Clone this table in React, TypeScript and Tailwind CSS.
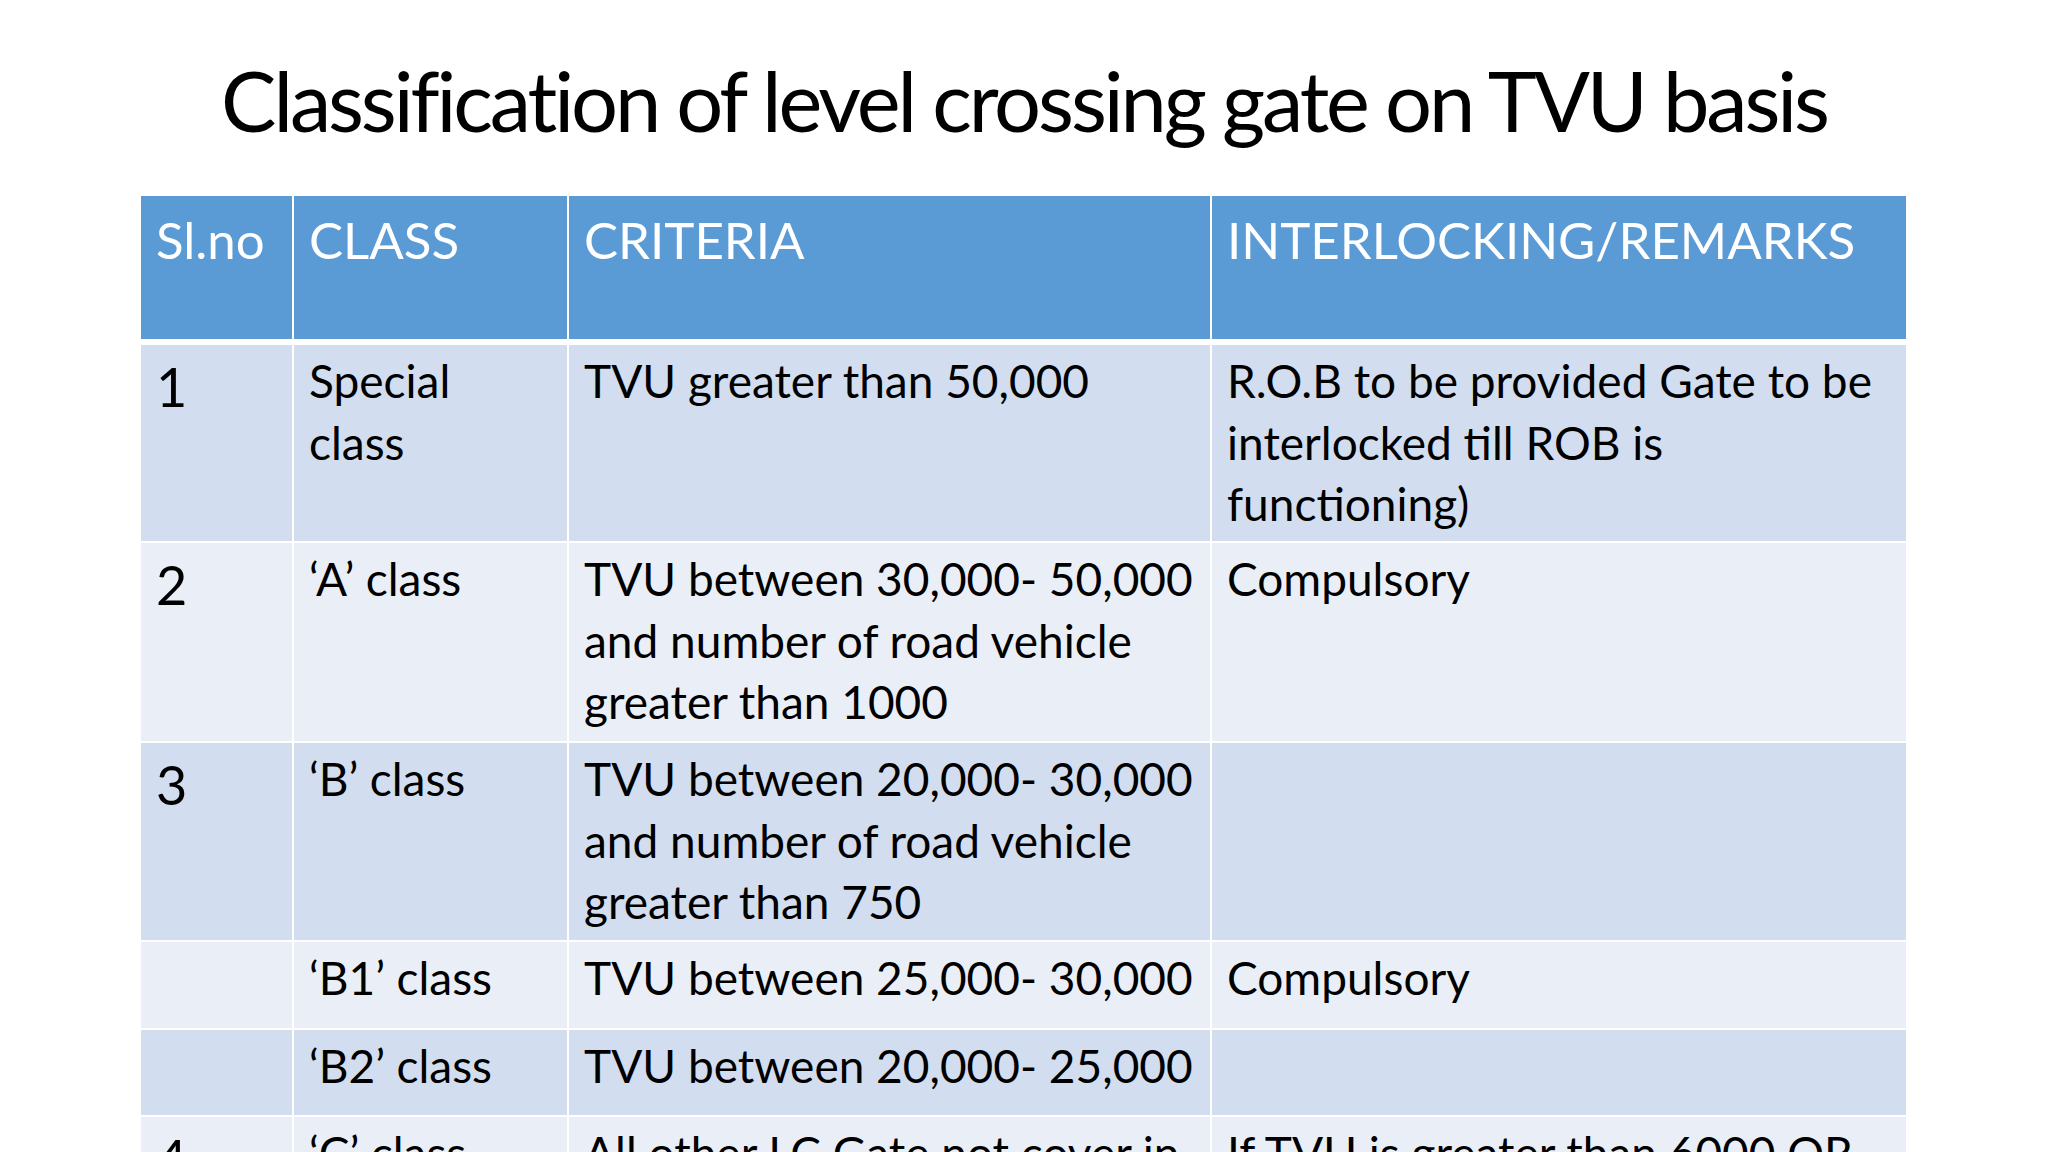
import React from "react";

const cols = "grid grid-cols-[151px_273px_641px_694px] gap-x-[2px]";

type Row = {
  h: string;
  bg: string;
  no: string;
  cls: React.ReactNode;
  crit: React.ReactNode;
  rem: React.ReactNode;
};

const rows: Row[] = [
  {
    h: "h-[196px]",
    bg: "bg-[#d2deef]",
    no: "1",
    cls: (
      <>
        Special
        <br />
        class
      </>
    ),
    crit: "TVU greater than 50,000",
    rem: (
      <>
        R.O.B to be provided Gate to be
        <br />
        interlocked till ROB is
        <br />
        functioning)
      </>
    ),
  },
  {
    h: "h-[198px]",
    bg: "bg-[#eaeff7]",
    no: "2",
    cls: "\u2018A\u2019 class",
    crit: (
      <>
        TVU between 30,000- 50,000
        <br />
        and number of road vehicle
        <br />
        greater than 1000
      </>
    ),
    rem: "Compulsory",
  },
  {
    h: "h-[197px]",
    bg: "bg-[#d2deef]",
    no: "3",
    cls: "\u2018B\u2019 class",
    crit: (
      <>
        TVU between 20,000- 30,000
        <br />
        and number of road vehicle
        <br />
        greater than 750
      </>
    ),
    rem: "",
  },
  {
    h: "h-[86px]",
    bg: "bg-[#eaeff7]",
    no: "",
    cls: "\u2018B1\u2019 class",
    crit: "TVU between 25,000- 30,000",
    rem: "Compulsory",
  },
  {
    h: "h-[85px]",
    bg: "bg-[#d2deef]",
    no: "",
    cls: "\u2018B2\u2019 class",
    crit: "TVU between 20,000- 25,000",
    rem: "",
  },
  {
    h: "h-[200px]",
    bg: "bg-[#eaeff7]",
    no: "4",
    cls: "\u2018C\u2019 class",
    crit: "All other LC Gate not cover in",
    rem: "If TVU is greater than 6000 OR",
  },
];

export default function App() {
  return (
    <div
      className="w-[2048px] h-[1152px] overflow-hidden bg-white text-black"
      style={{ fontFamily: "Lato, 'Open Sans', sans-serif" }}
    >
      <div className="h-[196px] pt-[51px] text-center text-[83px] leading-[99.6px] tracking-[-3.1px] whitespace-nowrap">
        Classification of level crossing gate on TVU basis
      </div>
      <div className="ml-[141px] w-[1765px] flex flex-col">
        <div className={`${cols} h-[143px] text-white text-[51px] leading-[61px]`}>
          <div className="bg-[#5b9bd5] pl-[15px] pt-[13px] whitespace-nowrap">Sl.no</div>
          <div className="bg-[#5b9bd5] pl-[15px] pt-[13px] whitespace-nowrap">CLASS</div>
          <div className="bg-[#5b9bd5] pl-[15px] pt-[13px] whitespace-nowrap">CRITERIA</div>
          <div className="bg-[#5b9bd5] pl-[15px] pt-[13px] whitespace-nowrap">INTERLOCKING/REMARKS</div>
        </div>
        <div className="flex flex-col gap-y-[2px] mt-[6px]">
          {rows.map((r, i) => (
            <div key={i} className={`${cols} ${r.h}`}>
              <div className={`${r.bg} pl-[15px] pt-[9px] text-[54px] leading-[65px] whitespace-nowrap`}>
                {r.no}
              </div>
              <div className={`${r.bg} pl-[15px] pt-[5px] text-[46px] leading-[61.5px] whitespace-nowrap`}>
                {r.cls}
              </div>
              <div className={`${r.bg} pl-[15px] pt-[5px] text-[46px] leading-[61.5px] whitespace-nowrap`}>
                {r.crit}
              </div>
              <div className={`${r.bg} pl-[15px] pt-[5px] text-[46px] leading-[61.5px] whitespace-nowrap`}>
                {r.rem}
              </div>
            </div>
          ))}
        </div>
      </div>
    </div>
  );
}
